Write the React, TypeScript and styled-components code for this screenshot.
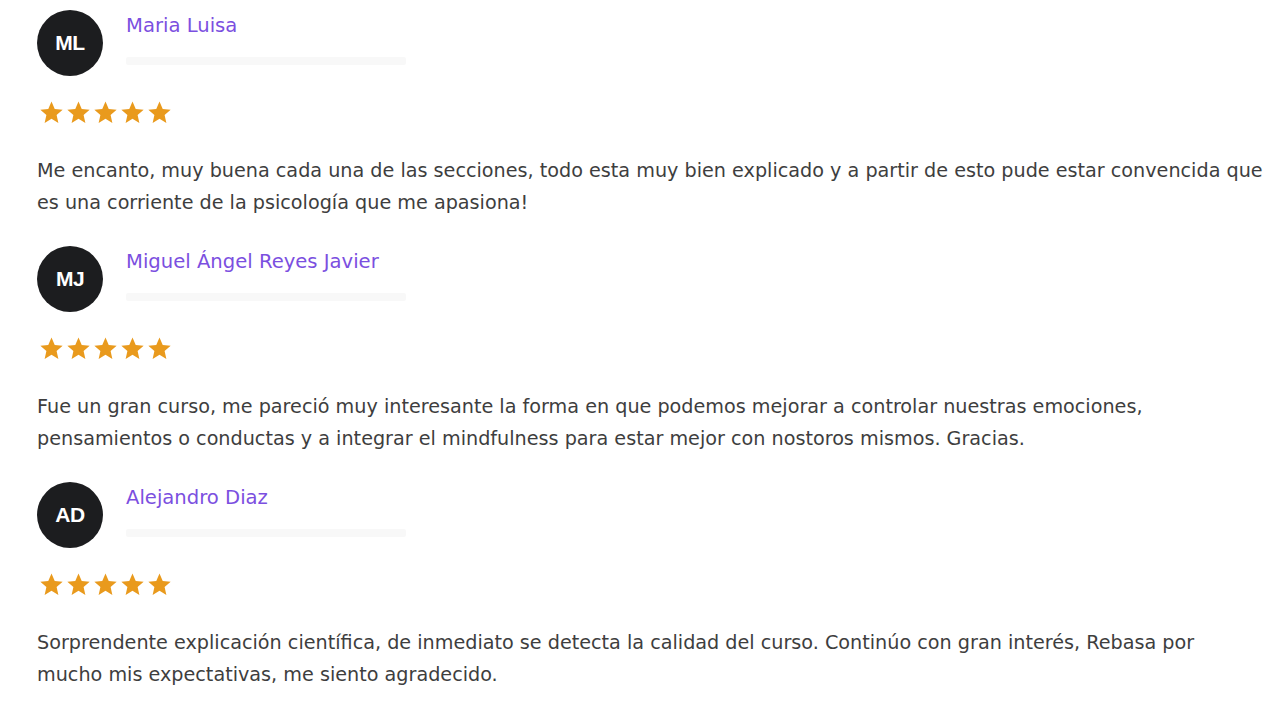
import styled, { createGlobalStyle } from "styled-components";

const GlobalStyle = createGlobalStyle`
  html, body {
    margin: 0;
    padding: 0;
    background: #fff;
  }
  body {
    font-family: "DejaVu Sans", "Noto Sans", sans-serif;
  }
`

type Review = {
  initials: string
  name: string
  text: string
}

const reviews: Review[] = [
  {
    initials: 'ML',
    name: 'Maria Luisa',
    text: 'Me encanto, muy buena cada una de las secciones, todo esta muy bien explicado y a partir de esto pude estar convencida que es una corriente de la psicología que me apasiona!',
  },
  {
    initials: 'MJ',
    name: 'Miguel Ángel Reyes Javier',
    text: 'Fue un gran curso, me pareció muy interesante la forma en que podemos mejorar a controlar nuestras emociones, pensamientos o conductas y a integrar el mindfulness para estar mejor con nostoros mismos. Gracias.',
  },
  {
    initials: 'AD',
    name: 'Alejandro Diaz',
    text: 'Sorprendente explicación científica, de inmediato se detecta la calidad del curso. Continúo con gran interés, Rebasa por mucho mis expectativas, me siento agradecido.',
  },
]

const Star = () => (
  <svg width="25" height="25" viewBox="0 0 24 24">
    <path
      d="M12 1.5l3.1 7.1 7.6.7-5.8 5.1 1.7 7.6L12 18l-6.6 4 1.7-7.6-5.8-5.1 7.6-.7z"
      fill="#e99a1d"
    />
  </svg>
)

export default function App() {
  return (
    <Page>
      <GlobalStyle />
      {reviews.map((item, i) => (
        <ReviewItem key={i}>
          <Header>
            <Avatar>{item.initials}</Avatar>
            <NameBlock>
              <Name>{item.name}</Name>
              <DateBar />
            </NameBlock>
          </Header>
          <Stars>
            {[0, 1, 2, 3, 4].map((s) => <Star key={s} />)}
          </Stars>
          <Text>{item.text}</Text>
        </ReviewItem>
      ))}
    </Page>
  )
}

const Page = styled.div`
  padding: 10px 0 0 37px;
  display: flex;
  flex-direction: column;
  gap: 27px;
`

const ReviewItem = styled.div`
  display: flex;
  flex-direction: column;
`

const Header = styled.div`
  display: flex;
  align-items: flex-start;
  gap: 23px;
`

const Avatar = styled.div`
  width: 66px;
  height: 66px;
  border-radius: 50%;
  background: #1c1d1f;
  color: #fff;
  display: flex;
  align-items: center;
  justify-content: center;
  font-family: "Liberation Sans", Arial, sans-serif;
  font-weight: 700;
  font-size: 21px;
  letter-spacing: -0.5px;
  flex-shrink: 0;
`

const NameBlock = styled.div`
  display: flex;
  flex-direction: column;
  padding-top: 2px;
`

const Name = styled.div`
  color: #7b4fe0;
  font-size: 19.6px;
  line-height: 28px;
`

const DateBar = styled.div`
  margin-top: 17px;
  width: 280px;
  height: 8px;
  background: #f8f8f8;
  border-radius: 2px;
`

const Stars = styled.div`
  display: flex;
  gap: 2px;
  margin-top: 24px;
  margin-left: 2px;
`

const Text = styled.p`
  margin: 30px 0 0;
  max-width: 1227px;
  font-size: 19.2px;
  line-height: 32px;
  color: #3e3e3e;
`
